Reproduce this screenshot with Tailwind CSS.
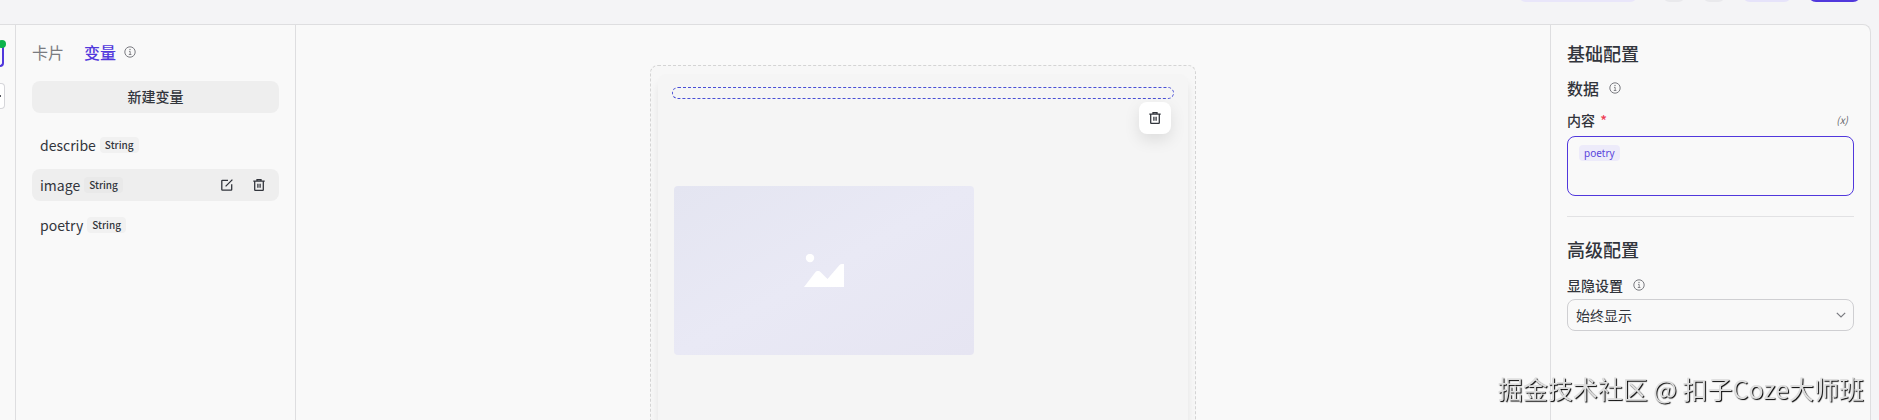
<!DOCTYPE html>
<html lang="zh-CN">
<head>
  <meta charset="UTF-8" />
  <meta name="viewport" content="width=device-width, initial-scale=1.0"/>
  <title>卡片编辑器</title>
  <script src="https://cdn.jsdelivr.net/npm/@tailwindcss/browser@4"></script>
</head>
<body class="flex h-screen flex-col overflow-hidden bg-[#f4f4f6] font-['Noto_Sans_CJK_SC',sans-serif] text-[#32353c]">

  <!-- Shared icons -->
  <svg class="hidden" aria-hidden="true">
    <symbol id="icon-info" viewBox="0 0 12 12">
      <circle cx="6" cy="6" r="5.2" fill="none" stroke="currentColor"/>
      <path d="M5 5.4h1.2v3M4.8 8.5h2.6" fill="none" stroke="currentColor" stroke-width=".9"/>
      <circle cx="6" cy="3.5" r=".7" fill="currentColor"/>
    </symbol>
    <symbol id="icon-trash" viewBox="0 0 12 12">
      <path d="M.3 2.2h11.4M4 1.8V.7h4v1.1M1.7 2.6v8.2q0 .6.6.6h7.4q.6 0 .6-.6V2.6M4.9 4.8v4M7.1 4.8v4" fill="none" stroke="currentColor" stroke-width="1.3"/>
    </symbol>
    <symbol id="icon-edit" viewBox="0 0 12 12">
      <path d="M7 1.3H1.4q-.6 0-.6.6v8.7q0 .6.6.6h8.7q.6 0 .6-.6V5.2M4.6 7.4 11.4.6" fill="none" stroke="currentColor" stroke-width="1.3"/>
    </symbol>
  </svg>

  <!-- Top toolbar -->
  <header class="flex h-6 shrink-0 items-start justify-end gap-4 overflow-hidden pr-[18px]">
    <button aria-label="状态" class="-mt-[30px] mr-2 h-8 w-[120px] rounded-lg bg-[#e9e6fa]"></button>
    <button aria-label="撤销" class="-mt-[30px] h-8 w-6 rounded-lg bg-[#e9e9ec]"></button>
    <button aria-label="重做" class="-mt-[30px] h-8 w-6 rounded-lg bg-[#e9e9ec]"></button>
    <button aria-label="预览" class="-mt-[30px] h-8 w-[50px] rounded-lg bg-[#e6e3fa]"></button>
    <button aria-label="发布" class="-mt-[30px] h-8 w-[53px] rounded-lg bg-[#5138dc]"></button>
  </header>

  <div class="mr-2 flex min-h-0 flex-1 overflow-hidden rounded-tr-lg border-t border-r border-[#dedee0] bg-[#f9f9f9]">

    <!-- Left rail -->
    <nav class="w-4 shrink-0 overflow-hidden border-r border-[#dedee0] pt-[22px]">
      <div class="relative h-5 w-1 rounded-br-sm border-r-2 border-b-2 border-[#5138dc]">
        <span class="absolute -top-[7px] -left-[2px] size-2 rounded-full bg-[#0cb34c]"></span>
      </div>
      <div class="mt-4 flex h-[26px] w-[5px] items-center rounded-r-sm border border-l-0 border-[#d6d6da] bg-white">
        <span class="h-[2px] w-[1px] bg-[#55565c]"></span>
      </div>
    </nav>

    <!-- Variables -->
    <aside class="w-[280px] shrink-0 border-r border-[#dedee0] px-4 pt-[15px]">
      <div class="flex h-6 items-center text-[16px] leading-6">
        <button class="text-[#7a7b80]">卡片</button>
        <button class="ml-5 font-medium text-[#5138dc]">变量</button>
        <svg class="ml-2 size-3 text-[#7a7b80]"><use href="#icon-info"/></svg>
      </div>
      <button class="mt-[17px] h-8 w-full rounded-lg bg-[#eeeeee] pb-[2px] text-[14px] leading-5 font-medium">新建变量</button>

      <ul class="mt-4 space-y-2 text-[14px]">
        <li class="flex h-8 items-center gap-1 px-2">
          <span class="leading-6">describe</span>
          <span class="rounded-sm bg-[#f1f1f1] px-[5px] text-[10px] leading-4 font-medium">String</span>
        </li>
        <li class="flex h-8 items-center gap-1 rounded-lg bg-[#eeeeee] px-2">
          <span class="leading-6">image</span>
          <span class="rounded-sm bg-[#e9e9e9] px-[5px] text-[10px] leading-4 font-medium">String</span>
          <button aria-label="编辑" class="ml-auto flex size-6 items-center justify-center"><svg class="size-3"><use href="#icon-edit"/></svg></button>
          <button aria-label="删除" class="ml-1 flex size-6 items-center justify-center"><svg class="size-3"><use href="#icon-trash"/></svg></button>
        </li>
        <li class="flex h-8 items-center gap-1 px-2">
          <span class="leading-6">poetry</span>
          <span class="rounded-sm bg-[#f1f1f1] px-[5px] text-[10px] leading-4 font-medium">String</span>
        </li>
      </ul>
    </aside>

    <!-- Canvas -->
    <main class="flex min-w-0 flex-1 justify-center overflow-hidden pt-10">
      <div class="h-[600px] w-[546px] shrink-0 rounded-lg border border-dashed border-[#d4d4d4] bg-[#f7f7f7] px-[7px] pt-2">
        <div class="h-full rounded-lg bg-[#f5f5f5] px-[14px] pt-[13px] shadow-[0_8px_8px_rgba(0,0,0,0.08)]">
          <div class="relative h-3 rounded-md border border-dashed border-[#4a50d6]">
            <button aria-label="删除组件" class="absolute top-[14px] right-[2px] flex size-8 items-center justify-center rounded-lg bg-white shadow-[0_6px_16px_rgba(0,0,0,0.10)]">
              <svg class="size-3"><use href="#icon-trash"/></svg>
            </button>
          </div>
          <div class="mt-[87px] ml-[2px] flex h-[169px] w-[300px] items-center justify-center rounded-[4px] bg-linear-to-br from-[#e4e5f1] via-[#e9e9f5] to-[#e6e5f2]">
            <svg class="h-[34px] w-10" viewBox="0 0 40 34" fill="#fff">
              <circle cx="6" cy="4" r="4.2"/>
              <path d="M0 33 11.5 18q.8-1 2-1h1q1.2 0 2 1l7 7L35.5 11q1-1 2.500-1h2v23z"/>
            </svg>
          </div>
        </div>
      </div>
    </main>

    <!-- Settings -->
    <section class="w-80 shrink-0 border-l border-[#dedee0] px-4 pt-[14px]">
      <h2 class="text-[18px] leading-7 font-medium">基础配置</h2>
      <div class="mt-[9px] flex h-6 items-center gap-[10px]">
        <h3 class="text-[16px] leading-6 font-medium">数据</h3>
        <svg class="size-3 text-[#7a7b80]"><use href="#icon-info"/></svg>
      </div>
      <div class="mt-[10px] flex h-5 items-center">
        <label for="content" class="text-[14px] leading-5 font-medium">内容 <span class="ml-[2px] text-[#ee3f55]">*</span></label>
        <button aria-label="插入变量" class="mr-[6px] ml-auto text-[10px] leading-4 text-[#66676d] italic">(x)</button>
      </div>
      <div class="mt-[6px] flex h-[60px] items-start gap-1 rounded-lg border border-[#5138dc] px-[11px] py-2">
        <span class="rounded-sm bg-[#edebfa] px-[5px] font-['Noto_Sans'] text-[10px] leading-4 text-[#5a45dc]">poetry</span>
        <textarea id="content" class="h-10 min-w-0 flex-1 resize-none bg-transparent text-[12px] leading-4 outline-none"></textarea>
      </div>
      <hr class="mt-5 border-[#e2e2e4]">
      <h2 class="mt-[18px] text-[18px] leading-7 font-medium">高级配置</h2>
      <div class="mt-[10px] flex h-6 items-center gap-[10px]">
        <label for="visibility" class="text-[14px] leading-5 font-medium">显隐设置</label>
        <svg class="size-3 text-[#7a7b80]"><use href="#icon-info"/></svg>
      </div>
      <div class="relative mt-[2px]">
        <select id="visibility" class="h-8 w-full appearance-none rounded-lg border border-[#cfcfd2] bg-transparent px-2 text-[14px] leading-5">
          <option>始终显示</option>
        </select>
        <svg class="pointer-events-none absolute top-[13px] right-2 h-[6px] w-[10px] text-[#7a7b80]" viewBox="0 0 10 6"><path d="M.8.8 5 5 9.2.8" fill="none" stroke="currentColor" stroke-width="1.2"/></svg>
      </div>
    </section>
  </div>

  <!-- Watermark -->
  <p class="pointer-events-none fixed right-[15px] bottom-3 text-[25px] leading-10 whitespace-nowrap text-[#dedede] [text-shadow:1px_1px_1px_#000]">掘金技术社区 @ 扣子Coze大师班</p>
</body>
</html>
